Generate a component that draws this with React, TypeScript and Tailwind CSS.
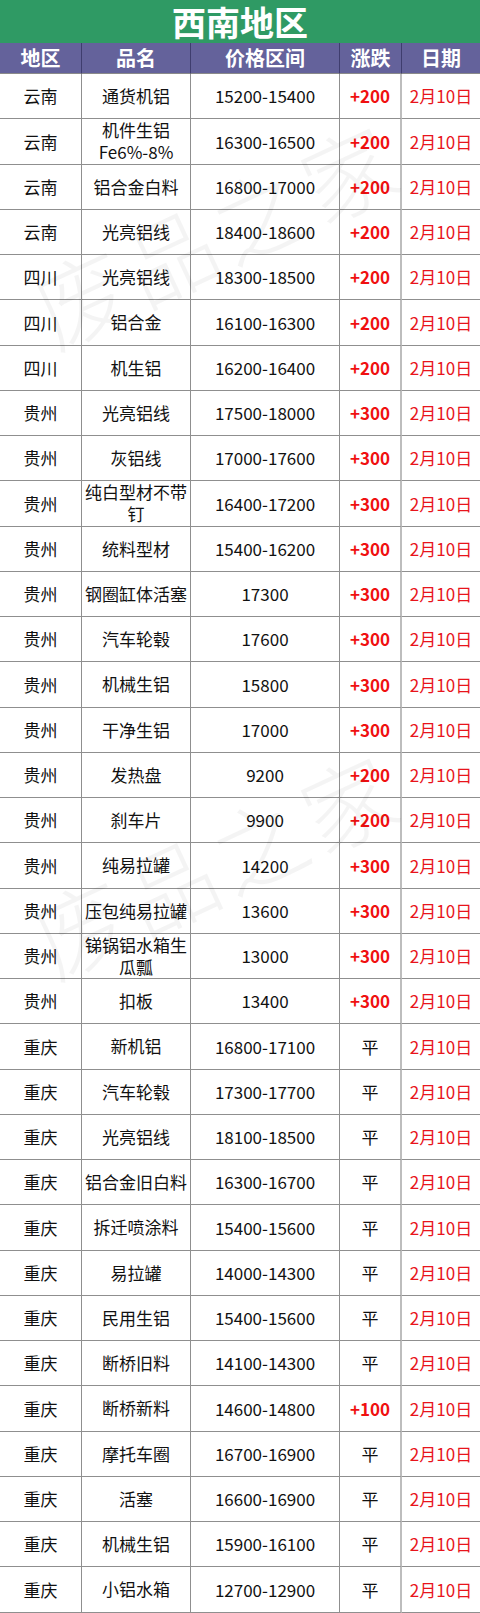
import React from 'react';

type Row = [string, string, string, string];

// region, product, price range, change
const ROWS: Row[] = [
  ['云南', '通货机铝', '15200-15400', '+200'],
  ['云南', '机件生铝\nFe6%-8%', '16300-16500', '+200'],
  ['云南', '铝合金白料', '16800-17000', '+200'],
  ['云南', '光亮铝线', '18400-18600', '+200'],
  ['四川', '光亮铝线', '18300-18500', '+200'],
  ['四川', '铝合金', '16100-16300', '+200'],
  ['四川', '机生铝', '16200-16400', '+200'],
  ['贵州', '光亮铝线', '17500-18000', '+300'],
  ['贵州', '灰铝线', '17000-17600', '+300'],
  ['贵州', '纯白型材不带钉', '16400-17200', '+300'],
  ['贵州', '统料型材', '15400-16200', '+300'],
  ['贵州', '钢圈缸体活塞', '17300', '+300'],
  ['贵州', '汽车轮毂', '17600', '+300'],
  ['贵州', '机械生铝', '15800', '+300'],
  ['贵州', '干净生铝', '17000', '+300'],
  ['贵州', '发热盘', '9200', '+200'],
  ['贵州', '刹车片', '9900', '+200'],
  ['贵州', '纯易拉罐', '14200', '+300'],
  ['贵州', '压包纯易拉罐', '13600', '+300'],
  ['贵州', '锑锅铝水箱生瓜瓢', '13000', '+300'],
  ['贵州', '扣板', '13400', '+300'],
  ['重庆', '新机铝', '16800-17100', '平'],
  ['重庆', '汽车轮毂', '17300-17700', '平'],
  ['重庆', '光亮铝线', '18100-18500', '平'],
  ['重庆', '铝合金旧白料', '16300-16700', '平'],
  ['重庆', '拆迁喷涂料', '15400-15600', '平'],
  ['重庆', '易拉罐', '14000-14300', '平'],
  ['重庆', '民用生铝', '15400-15600', '平'],
  ['重庆', '断桥旧料', '14100-14300', '平'],
  ['重庆', '断桥新料', '14600-14800', '+100'],
  ['重庆', '摩托车圈', '16700-16900', '平'],
  ['重庆', '活塞', '16600-16900', '平'],
  ['重庆', '机械生铝', '15900-16100', '平'],
  ['重庆', '小铝水箱', '12700-12900', '平'],
];

const COLS = 'grid-cols-[82px_109px_149px_62px_78px]';

export default function App() {
  return (
    <div
      className="relative w-[480px] overflow-hidden bg-white"
      style={{ fontFamily: '"Noto Sans CJK SC", "Noto Sans", sans-serif' }}
    >
      <div className="flex h-[43px] items-center justify-center bg-[#2f9a64] text-[34px] font-bold leading-[43px] text-white">
        西南地区
      </div>

      <div className={`grid ${COLS} h-[31px] bg-[#64629b] text-[20px] font-bold leading-none text-white`}>
        {['地区', '品名', '价格区间', '涨跌', '日期'].map((h, i) => (
          <div
            key={h}
            className={`flex items-center justify-center border-b border-[#8a8a8a] ${i < 4 ? 'border-r border-r-[#3f3d6e]' : ''}`}
          >
            {h}
          </div>
        ))}
      </div>

      {ROWS.map(([region, name, price, change], idx) => (
        <div key={idx} className={`grid ${COLS} h-[45.26px] text-[17px] text-[#111]`}>
          <div className="flex items-center justify-center border-b border-r border-[#8f8f8f]">{region}</div>
          <div className="flex items-center justify-center whitespace-pre-line border-b border-r border-[#8f8f8f] px-[2px] text-center leading-[22px]">
            {name}
          </div>
          <div className="flex items-center justify-center border-b border-r border-[#8f8f8f]">{price}</div>
          <div
            className={`flex items-center justify-center border-b border-[#8f8f8f] border-r-2 border-r-[#bdbdbd] ${
              change === '平' ? '' : 'font-bold text-[#f01010]'
            }`}
          >
            {change}
          </div>
          <div className="flex items-center justify-center border-b border-[#8f8f8f] text-[#e8141c]">2月10日</div>
        </div>
      ))}

      {/* watermark */}
      <div className="pointer-events-none absolute left-[20px] top-[185px] -rotate-[25deg] whitespace-nowrap text-[92px] font-light leading-none tracking-[6px] text-black/[0.045]">
        废品之家
      </div>
      <div className="pointer-events-none absolute left-[20px] top-[815px] -rotate-[25deg] whitespace-nowrap text-[92px] font-light leading-none tracking-[6px] text-black/[0.045]">
        废品之家
      </div>
    </div>
  );
}
